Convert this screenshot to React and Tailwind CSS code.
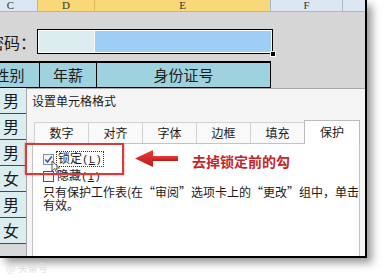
export default function App() {
  const tabs = ["数字", "对齐", "字体", "边框", "填充"];
  const rows = ["男", "男", "男", "女", "男", "女"];
  return (
    <div className="w-[386px] h-[278px] bg-white relative overflow-hidden font-['Noto_Sans_CJK_SC',sans-serif] text-[#1a1a1a]">
      <div className="relative w-[367px] h-[258px] border-r-2 border-b-2 border-black shadow-[5px_5px_8px_rgba(0,0,0,0.4)] overflow-hidden bg-[#d6d6d6]">
        {/* column headers */}
        <div className="flex h-[12px] ml-[-16px] border-b border-[#a7b8cc] text-[11px] leading-[11px] font-['Liberation_Serif',serif] text-[#333]">
          <div className="w-[54px] bg-[#dde7f3] border-r border-[#a7b8cc] text-center">C</div>
          <div className="w-[57px] bg-[#f9d879] border-r border-[#e2b95a] text-center">D</div>
          <div className="w-[176px] bg-[#f9d879] border-r border-[#a7b8cc] text-center">E</div>
          <div className="w-[72px] bg-[#dde7f3] border-r border-[#a7b8cc] text-center">F</div>
          <div className="flex-1 bg-[#dde7f3]"></div>
        </div>
        {/* password row */}
        <div className="h-[49px] flex items-start ml-[-16px] pt-[17px]">
          <div className="w-[53px] h-[25px] flex items-center">
            <span className="ml-[4px] text-[16px] leading-[18px] whitespace-nowrap">密码：</span>
          </div>
          <div className="relative w-[236px] h-[25px] border border-black">
            <div className="flex h-full border border-white">
              <div className="w-[56px] h-full bg-[#dcedf0] border-r border-white"></div>
              <div className="flex-1 h-full bg-[#9ecdf6]"></div>
            </div>
            <div className="absolute right-[-4px] bottom-[-4px] w-[6px] h-[6px] bg-black border border-white"></div>
          </div>
        </div>
        {/* table header row */}
        <div className="ml-[-16px] w-[287px] h-[27px] flex border-t-2 border-b border-r border-black bg-[#9fd2df] text-[15px] leading-[24px]">
          <div className="w-[56px] border-r border-black text-center pr-[4px]">性别</div>
          <div className="w-[57px] border-r border-black text-center">年薪</div>
          <div className="flex-1 text-center">身份证号</div>
        </div>
        {/* data rows */}
        <div className="ml-[-16px] w-[54px] flex flex-col">
          {rows.map((r, i) => (
            <div key={i} className="h-[26px] bg-[#dcedf0] border-b border-[#4a4a4a] text-[16px] leading-[25px] text-center">{r}</div>
          ))}
          <div className="h-[12px] bg-[#d9d9d9]"></div>
        </div>

        {/* dialog */}
        <div className="absolute left-[26px] top-[88px] right-0 bottom-0 bg-[#f5f5f5] border-l border-t border-[#a8a8a8] flex flex-col">
          <div className="h-[32px] pl-[5px] pt-[5px] text-[12px] leading-[14px]">设置单元格格式</div>
          <div className="flex-1 flex flex-col px-[5px]">
            <div className="relative z-10 flex items-end h-[22px] pl-[2px] text-[12px]">
              {tabs.map((t) => (
                <div key={t} className="w-[54px] h-[21px] border-t border-l border-[#d2d2d2] bg-[#f9f9f9] text-center leading-[20px]">{t}</div>
              ))}
              <div className="w-[56px] h-[24px] mb-[-1px] bg-white border border-b-0 border-[#bcbcbc] text-center leading-[22px]">保护</div>
            </div>
            <div className="flex-1 bg-white border-t border-l border-r border-[#c4c4c4] pl-[10px] pt-[8px] text-[12px]">
              <div className="flex items-center h-[14px]">
                <svg width="11" height="11" viewBox="0 0 11 11">
                  <rect x="0.5" y="0.5" width="10" height="10" fill="#f3f5f8" stroke="#7f8fa5" />
                  <path d="M2.3 5.4 L4.5 8 L8.8 2.4" stroke="#3c5f90" strokeWidth="1.6" fill="none" />
                </svg>
                <span className="ml-[2px] px-[1px] border border-dotted border-[#333] leading-[12px] whitespace-nowrap">
                  锁定<span className="font-['Liberation_Mono',monospace] text-[11px]">(<span className="underline">L</span>)</span>
                </span>
              </div>
              <div className="flex items-center h-[14px] mt-[3px]">
                <svg width="11" height="11" viewBox="0 0 11 11">
                  <rect x="0.5" y="0.5" width="10" height="10" fill="#f6f6f6" stroke="#555" />
                </svg>
                <span className="ml-[3px] leading-[12px] whitespace-nowrap">
                  隐藏<span className="font-['Liberation_Mono',monospace] text-[11px]">(<span className="underline">I</span>)</span>
                </span>
              </div>
              <div className="mt-[2px] text-[12px] leading-[13px] whitespace-nowrap">
                <div>只有保护工作表(在“审阅”选项卡上的“更改”组中，单击</div>
                <div>有效。</div>
              </div>
            </div>
          </div>
        </div>

        {/* annotations */}
        <div className="absolute left-[25px] top-[143px] w-[99px] h-[32px] border-2 border-[#d93b3b] shadow-[0_0_2px_rgba(220,50,50,0.6)]"></div>
        <svg className="absolute left-[134px] top-[149px]" width="46" height="20" viewBox="0 0 46 20">
          <defs>
            <linearGradient id="ag" x1="0" y1="0" x2="0" y2="1">
              <stop offset="0" stopColor="#f03a3a" />
              <stop offset="1" stopColor="#b81c1c" />
            </linearGradient>
          </defs>
          <polygon points="1,9.5 19,1 19,18" fill="url(#ag)" />
          <rect x="18" y="7" width="26" height="5" fill="url(#ag)" />
        </svg>
        <div className="absolute left-[192px] top-[152px] text-[14px] leading-[18px] font-bold text-[#c4262b] whitespace-nowrap">去掉锁定前的勾</div>
        <svg className="absolute left-[51px] top-[160px]" width="10" height="14" viewBox="0 0 10 14">
          <path d="M1 1 L1 11 L3.5 8.5 L5.5 12.5 L7 11.8 L5 8 L8.5 8 Z" fill="white" fillOpacity="0.6" stroke="#333" strokeWidth="0.8" />
        </svg>
      </div>
      <div className="absolute left-[6px] top-[262px] text-[10px] leading-[12px] text-[#dedede] whitespace-nowrap">@ 头条号</div>
    </div>
  );
}
